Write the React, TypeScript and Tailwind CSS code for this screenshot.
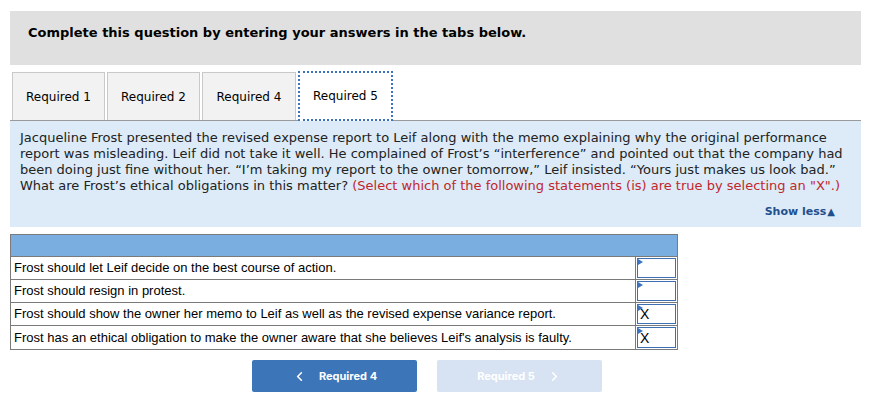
import { ChevronLeft, ChevronRight } from 'lucide-react'

const rows = [
  { text: 'Frost should let Leif decide on the best course of action.', val: '' },
  { text: 'Frost should resign in protest.', val: '' },
  { text: 'Frost should show the owner her memo to Leif as well as the revised expense variance report.', val: 'X' },
  { text: "Frost has an ethical obligation to make the owner aware that she believes Leif's analysis is faulty.", val: 'X' },
]

const tabs = [
  { label: 'Required 1', w: 'w-[93px]' },
  { label: 'Required 2', w: 'w-[93px]' },
  { label: 'Required 4', w: 'w-[94px]' },
]

export default function App() {
  return (
    <div className="w-[869px] h-[400px] bg-white pl-[10px] pt-[11px] text-black" style={{ fontFamily: 'Verdana, "DejaVu Sans", sans-serif' }}>
      <div className="w-[851px]">
        <div className="h-[54px] bg-[#e0e0e0] pl-[18px] pt-[14px] text-[13px] font-bold leading-[16px]">
          Complete this question by entering your answers in the tabs below.
        </div>

        <div className="mt-[6px] flex items-end gap-[2px] border-b border-[#9a9a9a] pl-[2px]">
          {tabs.map((t) => (
            <div key={t.label} className={`${t.w} flex h-[48px] items-center justify-center border border-b-0 border-[#c9c9c9] bg-[#f2f2f2] text-[12px]`}>
              {t.label}
            </div>
          ))}
          <div className="-mb-px flex h-[50px] w-[95px] items-center justify-center border-2 border-dotted border-[#3b73c0] bg-white text-[12px]">
            Required 5
          </div>
        </div>

        <div className="h-[106px] bg-[#dcebf7] pl-[10px] pr-[8px] pt-[9px] text-[13px] leading-[16px] text-[#222]">
          <p>
            Jacqueline Frost presented the revised expense report to Leif along with the memo explaining why the original performance
            report was misleading. Leif did not take it well. He complained of Frost’s “interference” and pointed out that the company had
            been doing just fine without her. “I’m taking my report to the owner tomorrow,” Leif insisted. “Yours just makes us look bad.”
            What are Frost’s ethical obligations in this matter?{' '}
            <span className="text-[#c1272d]">(Select which of the following statements (is) are true by selecting an "X".)</span>
          </p>
          <div className="mt-[10px] flex justify-end pr-[18px] text-[11px] font-bold text-[#1f4f8c]">
            Show less<span className="ml-[1px] text-[10px]">▲</span>
          </div>
        </div>

        <div className="mt-[7px] w-[668px] border border-[#7a7a7a]" style={{ fontFamily: '"Liberation Sans", Arial, sans-serif' }}>
          <div className="h-[22px] border-b border-[#7a7a7a] bg-[#7aaee0]" />
          {rows.map((r, i) => (
            <div key={i} className={`flex h-[23px] ${i < rows.length - 1 ? 'border-b border-[#7a7a7a]' : ''}`}>
              <div className="flex flex-1 items-center pl-[3px] text-[13px]">{r.text}</div>
              <div className="relative w-[42px] border-l border-[#7a7a7a] p-px">
                <div className="flex h-full items-center border-[1.5px] border-[#3d6fb3] pl-[2px] text-[14px] leading-none">
                  {r.val}
                </div>
                <span className="absolute left-[2px] top-[2px] h-0 w-0 border-y-[3px] border-l-[5px] border-y-transparent border-l-[#3b73c0]" />
              </div>
            </div>
          ))}
        </div>

        <div className="mt-[10px] flex gap-[20px] pl-[242px]" style={{ fontFamily: 'Inter, Roboto, sans-serif' }}>
          <div className="flex h-[32px] w-[165px] items-center justify-center gap-[12px] rounded-[2px] bg-[#3d75b9] text-[11px] font-bold text-white">
            <ChevronLeft size={15} strokeWidth={2.5} />
            <span>Required 4</span>
          </div>
          <div className="flex h-[32px] w-[165px] items-center justify-center gap-[12px] rounded-[2px] bg-[#d7e3f2] text-[11px] font-bold text-white">
            <span>Required 5</span>
            <ChevronRight size={15} strokeWidth={2.5} />
          </div>
        </div>
      </div>
    </div>
  )
}
